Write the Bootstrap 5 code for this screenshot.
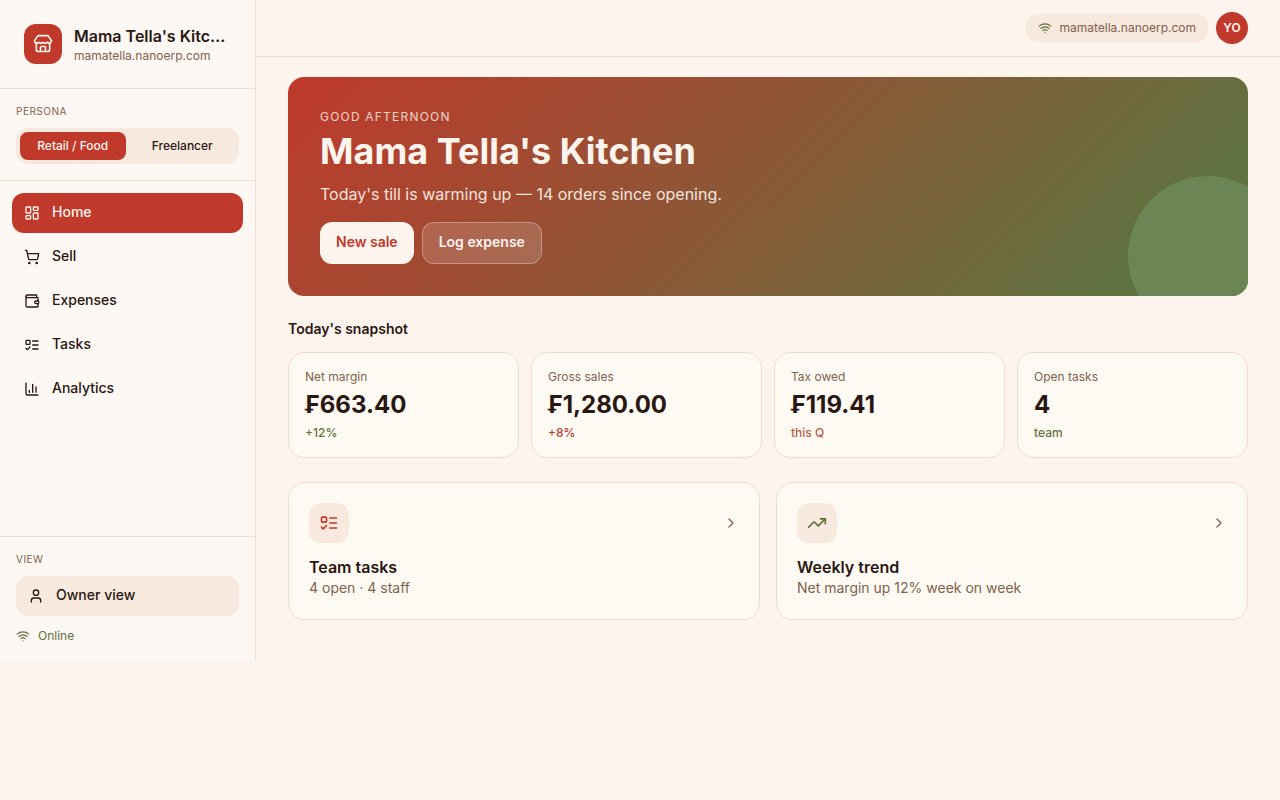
<!DOCTYPE html>
<html lang="en">
<head>
<meta charset="utf-8">
<meta name="viewport" content="width=device-width, initial-scale=1">
<title>Mama Tella's Kitchen</title>
<link href="https://cdn.jsdelivr.net/npm/bootstrap@5.3.0/dist/css/bootstrap.min.css" rel="stylesheet">
<style>
  :root { --tomato:#c0392b; --basil:#5f7240; --clay:#b8604a; --ink:#2a1712; --soft:#80624d; --line:#f3dccb; --sand:#f8e9de; --page:#fdf4ee; --panel:#fdf8f4; --paper:#fdfaf4; }
  body { font-family:Inter,"Liberation Sans",sans-serif; font-size:14px; line-height:20px; color:var(--ink); background:var(--page); }
  svg { fill:none; stroke:currentColor; stroke-width:2; stroke-linecap:round; stroke-linejoin:round; flex-shrink:0; }
  .i-14 { width:14px; height:14px; } .i-16 { width:16px; height:16px; } .i-20 { width:20px; height:20px; }
  .t-12 { font-size:12px; line-height:16px; } .t-16 { font-size:16px; line-height:24px; }
  .t-14 { display:block; padding-bottom:2px; font-size:14px; line-height:18px; }
  .soft { color:var(--soft); } .tomato { color:var(--tomato); } .basil { color:var(--basil); } .clay { color:var(--clay); }
  .gap-12 { gap:12px; } .pad-12 { padding:12px; } .pad-20 { padding:20px; }
  .side { width:256px; background:var(--panel); border-right:1px solid var(--line); }
  .rule-b { border-bottom:1px solid var(--line); } .rule-t { border-top:1px solid var(--line); }
  .brand-mark { width:38px; height:40px; border-radius:12px; background:var(--tomato); color:var(--page); }
  .overline { padding-bottom:2px; font-size:10px; line-height:13px; letter-spacing:.05em; text-transform:uppercase; color:var(--soft); }
  .switcher { background:var(--sand); border-radius:12px; }
  .switcher .btn { flex:1 1 0; padding:6px 4px; border:0; border-radius:8px; font-size:12px; line-height:16px; font-weight:500; color:var(--ink); }
  .switcher .btn.active, .side .nav-link.active { background:var(--tomato); color:var(--page); }
  .side .nav-link { padding:10px 12px; border-radius:12px; font-weight:500; color:var(--ink); }
  .owner.btn { padding:10px 12px; border:0; border-radius:12px; background:var(--sand); color:var(--ink); font-weight:500; }
  .topbar { padding:12px 32px; }
  .host { padding:6px 12px; border-radius:12px; background:var(--sand); }
  .avatar { width:32px; height:32px; border-radius:50%; border:0; padding:0; background:var(--tomato); color:var(--page); font-size:12px; font-weight:600; }
  main { padding:20px 32px 40px; }
  .hero { padding:32px; border-radius:16px; color:var(--page); background:linear-gradient(135deg,var(--tomato),var(--basil) 88%); }
  .hero::after { content:""; position:absolute; right:-40px; bottom:-40px; width:160px; height:160px; border-radius:50%; background:#6b8554; }
  .greeting { letter-spacing:.1em; text-transform:uppercase; opacity:.8; }
  .hero h1 { font-size:36px; line-height:45px; font-weight:700; }
  .hero p { opacity:.9; }
  .hero .btn { padding:10px 16px; border-radius:12px; font-weight:600; }
  .hero .btn-cream { border:0; background:var(--page); color:var(--tomato); }
  .hero .btn-glass { border:1px solid rgba(255,255,255,.3); background:rgba(255,255,255,.15); color:var(--page); }
  .tile { background:var(--paper); border:1px solid var(--line); border-radius:16px; color:var(--ink); }
  .figure-value { font-size:24px; line-height:32px; font-weight:700; }
  .stats { --bs-gutter-x:12px; --bs-gutter-y:12px; }
  .tile-icon { width:40px; height:40px; border-radius:12px; background:var(--sand); }
</style>
</head>
<body>
<div class="d-flex">
  <aside class="side d-flex flex-column flex-shrink-0">
    <div class="d-flex align-items-center gap-12 p-4 rule-b">
      <div class="brand-mark d-flex align-items-center justify-content-center flex-shrink-0">
        <svg class="i-20" viewBox="0 0 24 24"><path d="M15 21v-5a1 1 0 0 0-1-1h-4a1 1 0 0 0-1 1v5"/><path d="M17.774 10.31a1.12 1.12 0 0 0-1.549 0 2.5 2.5 0 0 1-3.451 0 1.12 1.12 0 0 0-1.548 0 2.5 2.5 0 0 1-3.452 0 1.12 1.12 0 0 0-1.549 0 2.5 2.5 0 0 1-3.77-3.248l2.889-4.184A2 2 0 0 1 7 2h10a2 2 0 0 1 1.653.873l2.895 4.192a2.5 2.5 0 0 1-3.774 3.244"/><path d="M4 10.95V19a2 2 0 0 0 2 2h12a2 2 0 0 0 2-2v-8.05"/></svg>
      </div>
      <div class="overflow-hidden">
        <div class="t-16 fw-semibold text-truncate">Mama Tella's Kitchen</div>
        <div class="t-12 soft text-truncate">mamatella.nanoerp.com</div>
      </div>
    </div>
    <div class="p-3 rule-b">
      <div class="overline mb-2">Persona</div>
      <div class="switcher d-flex gap-1 p-1">
        <button type="button" class="btn active">Retail / Food</button>
        <button type="button" class="btn">Freelancer</button>
      </div>
    </div>
    <nav class="nav flex-column flex-nowrap gap-1 pad-12 flex-grow-1">
      <a class="nav-link active d-flex align-items-center gap-12" href="#home"><svg class="i-16" viewBox="0 0 24 24"><rect x="3" y="3" width="7" height="9" rx="1"/><rect x="14" y="3" width="7" height="5" rx="1"/><rect x="14" y="12" width="7" height="9" rx="1"/><rect x="3" y="16" width="7" height="5" rx="1"/></svg><span class="t-14">Home</span></a>
      <a class="nav-link d-flex align-items-center gap-12" href="#sell"><svg class="i-16" viewBox="0 0 24 24"><circle cx="8" cy="21" r="1"/><circle cx="19" cy="21" r="1"/><path d="M2.05 2.05h2l2.66 12.42a2 2 0 0 0 2 1.58h9.78a2 2 0 0 0 1.95-1.57l1.65-7.43H5.12"/></svg><span class="t-14">Sell</span></a>
      <a class="nav-link d-flex align-items-center gap-12" href="#expenses"><svg class="i-16" viewBox="0 0 24 24"><path d="M19 7V4a1 1 0 0 0-1-1H5a2 2 0 0 0 0 4h15a1 1 0 0 1 1 1v4h-3a2 2 0 0 0 0 4h3a1 1 0 0 0 1-1v-2a1 1 0 0 0-1-1"/><path d="M3 5v14a2 2 0 0 0 2 2h15a1 1 0 0 0 1-1v-4"/></svg><span class="t-14">Expenses</span></a>
      <a class="nav-link d-flex align-items-center gap-12" href="#tasks"><svg class="i-16" viewBox="0 0 24 24"><rect x="3" y="5" width="6" height="6" rx="1"/><path d="m3 17 2 2 4-4"/><path d="M13 6h8M13 12h8M13 18h8"/></svg><span class="t-14">Tasks</span></a>
      <a class="nav-link d-flex align-items-center gap-12" href="#analytics"><svg class="i-16" viewBox="0 0 24 24"><path d="M3 3v16a2 2 0 0 0 2 2h16"/><path d="M18 17V9M13 17V5M8 17v-3"/></svg><span class="t-14">Analytics</span></a>
    </nav>
    <div class="p-3 rule-t">
      <div class="overline mb-2">View</div>
      <button type="button" class="owner btn d-flex align-items-center gap-12 w-100 text-start"><svg class="i-16" viewBox="0 0 24 24"><path d="M19 21v-2a4 4 0 0 0-4-4H9a4 4 0 0 0-4 4v2"/><circle cx="12" cy="7" r="4"/></svg><span class="t-14">Owner view</span></button>
      <div class="d-flex align-items-center gap-2 t-12 basil pt-2 mt-1"><svg class="i-14" viewBox="0 0 24 24"><path d="M12 20h.01M2 8.82a15 15 0 0 1 20 0M5 12.859a10 10 0 0 1 14 0M8.5 16.429a5 5 0 0 1 7 0"/></svg>Online</div>
    </div>
  </aside>

  <div class="flex-grow-1 overflow-hidden">
    <header class="topbar d-flex align-items-center justify-content-end gap-2 rule-b">
      <div class="host d-flex align-items-center gap-2 t-12 soft"><svg class="i-14 basil" viewBox="0 0 24 24"><path d="M12 20h.01M2 8.82a15 15 0 0 1 20 0M5 12.859a10 10 0 0 1 14 0M8.5 16.429a5 5 0 0 1 7 0"/></svg>mamatella.nanoerp.com</div>
      <button type="button" class="avatar">YO</button>
    </header>
    <main>
      <section class="hero position-relative overflow-hidden mb-4">
        <div class="greeting t-12 mb-1">Good afternoon</div>
        <h1 class="mb-2">Mama Tella's Kitchen</h1>
        <p class="t-16 mb-3">Today's till is warming up — 14 orders since opening.</p>
        <div class="d-flex gap-2">
          <button type="button" class="btn btn-cream"><span class="t-14">New sale</span></button>
          <button type="button" class="btn btn-glass"><span class="t-14">Log expense</span></button>
        </div>
      </section>

      <section class="mb-4">
        <div class="pb-2 mb-1"><h2 class="t-14 fw-semibold mb-0">Today's snapshot</h2></div>
        <div class="row row-cols-2 row-cols-lg-4 stats">
          <div class="col"><div class="tile p-3"><div class="t-12 soft">Net margin</div><div class="figure-value my-1">₣663.40</div><div class="t-12 fw-medium basil">+12%</div></div></div>
          <div class="col"><div class="tile p-3"><div class="t-12 soft">Gross sales</div><div class="figure-value my-1">₣1,280.00</div><div class="t-12 fw-medium tomato">+8%</div></div></div>
          <div class="col"><div class="tile p-3"><div class="t-12 soft">Tax owed</div><div class="figure-value my-1">₣119.41</div><div class="t-12 fw-medium clay">this Q</div></div></div>
          <div class="col"><div class="tile p-3"><div class="t-12 soft">Open tasks</div><div class="figure-value my-1">4</div><div class="t-12 fw-medium basil">team</div></div></div>
        </div>
      </section>

      <section class="row row-cols-1 row-cols-md-2 g-3">
        <div class="col"><a class="tile pad-20 d-block text-decoration-none" href="#tasks">
          <div class="d-flex align-items-center justify-content-between">
            <div class="tile-icon d-flex align-items-center justify-content-center tomato"><svg class="i-20" viewBox="0 0 24 24"><rect x="3" y="5" width="6" height="6" rx="1"/><path d="m3 17 2 2 4-4"/><path d="M13 6h8M13 12h8M13 18h8"/></svg></div>
            <svg class="i-16 soft" viewBox="0 0 24 24"><path d="m9 18 6-6-6-6"/></svg>
          </div>
          <div class="t-16 fw-semibold pt-2 mt-1">Team tasks</div>
          <div class="t-14 soft">4 open · 4 staff</div>
        </a></div>
        <div class="col"><a class="tile pad-20 d-block text-decoration-none" href="#analytics">
          <div class="d-flex align-items-center justify-content-between">
            <div class="tile-icon d-flex align-items-center justify-content-center basil"><svg class="i-20" viewBox="0 0 24 24"><path d="m22 7-8.5 8.5-5-5L2 17"/><path d="M16 7h6v6"/></svg></div>
            <svg class="i-16 soft" viewBox="0 0 24 24"><path d="m9 18 6-6-6-6"/></svg>
          </div>
          <div class="t-16 fw-semibold pt-2 mt-1">Weekly trend</div>
          <div class="t-14 soft">Net margin up 12% week on week</div>
        </a></div>
      </section>
    </main>
  </div>
</div>
<script src="https://cdn.jsdelivr.net/npm/bootstrap@5.3.0/dist/js/bootstrap.bundle.min.js"></script>
</body>
</html>
